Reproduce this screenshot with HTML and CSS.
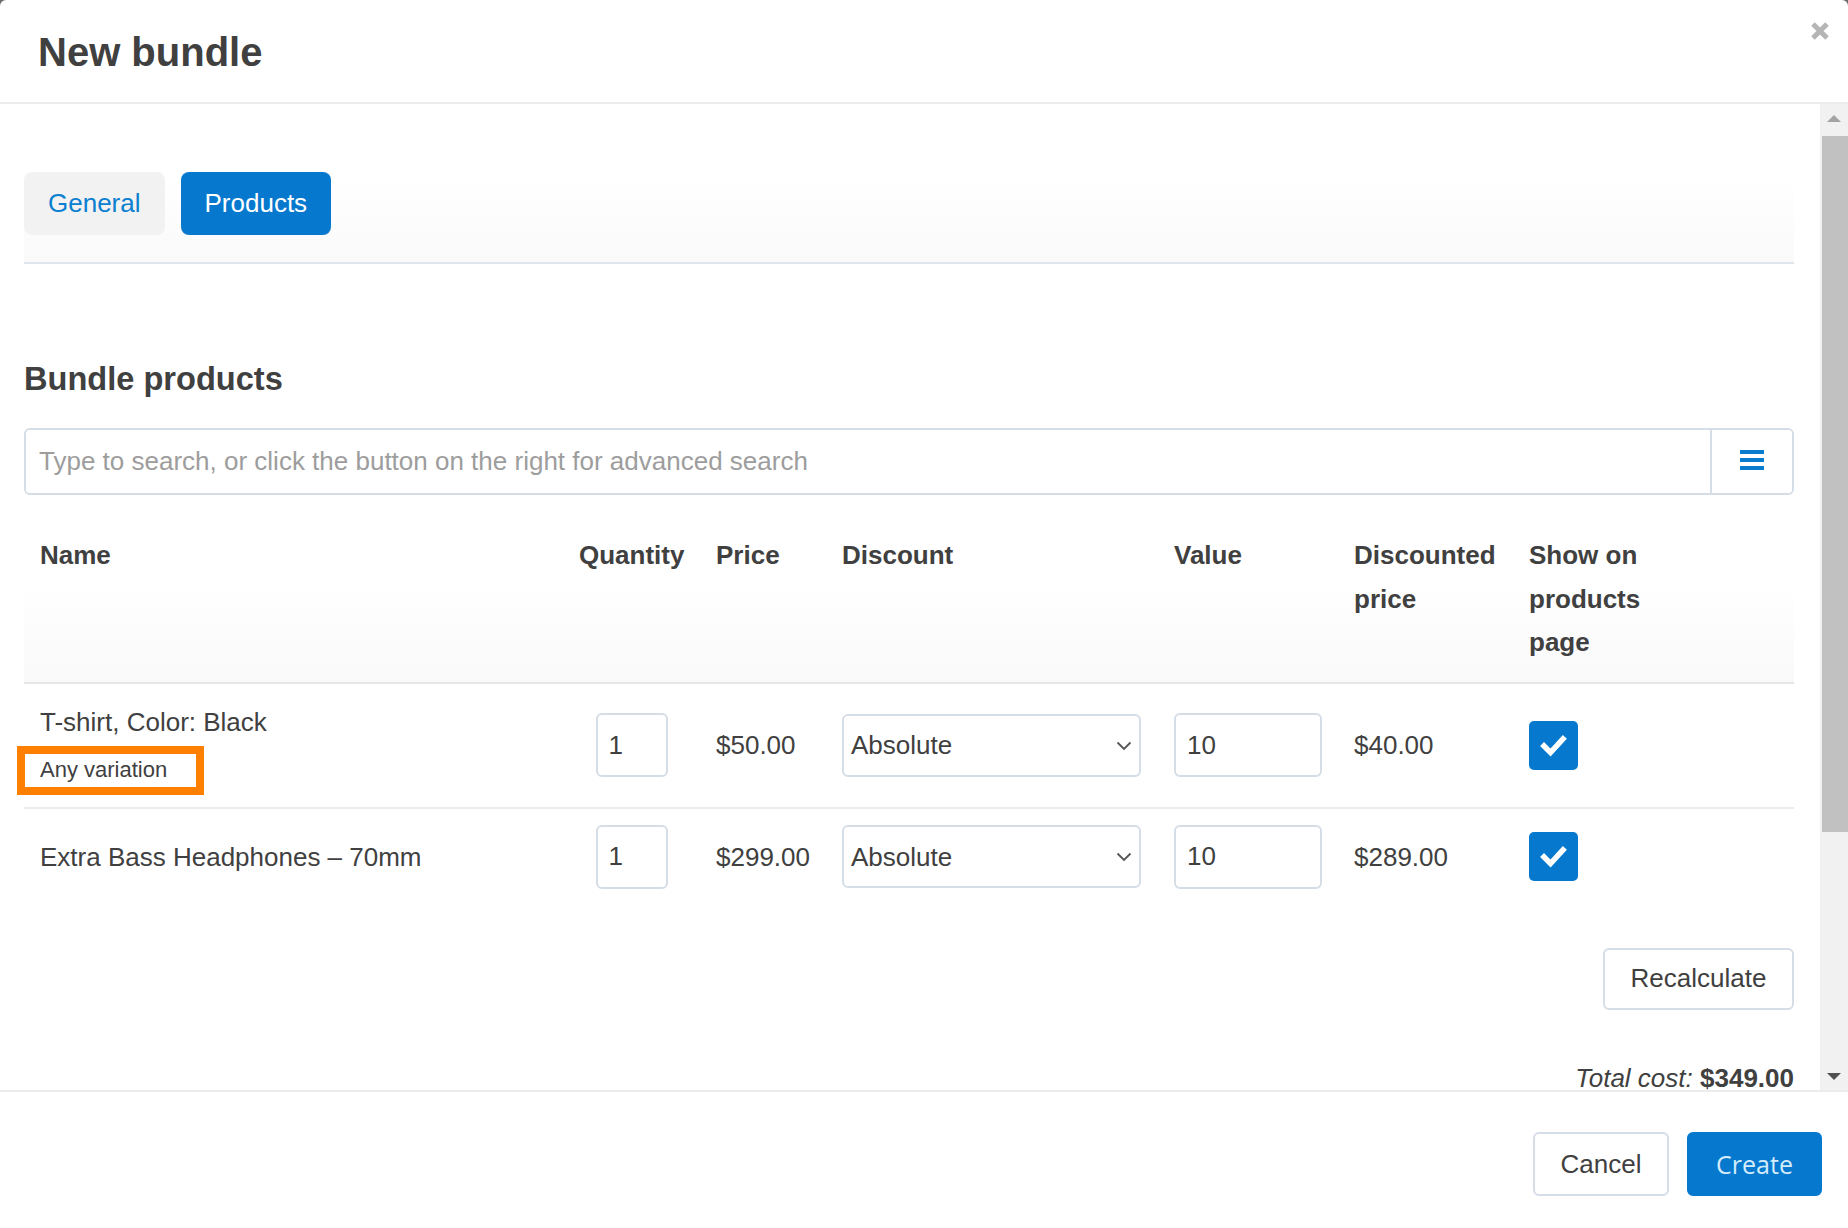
FILE: index.html
```html
<!DOCTYPE html>
<html lang="en">
<head>
<meta charset="utf-8">
<title>New bundle</title>
<link rel="stylesheet" href="styles.css">
</head>
<body>
<div class="modal">
  <header class="modal-header">
    <h1 class="modal-title">New bundle</h1>
    <button class="close-btn" type="button" aria-label="Close">
      <svg width="20" height="20" viewBox="0 0 20 20"><path d="M3 3 L17 17 M17 3 L3 17" stroke="#b5b5b5" stroke-width="5" stroke-linecap="butt"/></svg>
    </button>
  </header>

  <div class="modal-main">
    <div class="modal-body">
      <div class="tabs-wrap">
        <nav class="tabs">
          <button class="tab" type="button">General</button>
          <button class="tab tab-active" type="button">Products</button>
        </nav>
      </div>

      <h2 class="section-title">Bundle products</h2>

      <div class="search">
        <input class="search-input" type="text" placeholder="Type to search, or click the button on the right for advanced search">
        <button class="search-btn" type="button" aria-label="Advanced search">
          <span class="bars"><span></span><span></span><span></span></span>
        </button>
      </div>

      <table class="products">
        <colgroup>
          <col class="c-name"><col class="c-qty"><col class="c-price"><col class="c-disc"><col class="c-val"><col class="c-dprice"><col class="c-show"><col class="c-extra">
        </colgroup>
        <thead>
          <tr>
            <th>Name</th>
            <th>Quantity</th>
            <th>Price</th>
            <th>Discount</th>
            <th>Value</th>
            <th>Discounted price</th>
            <th>Show on products page</th>
            <th></th>
          </tr>
        </thead>
        <tbody>
          <tr class="row-first">
            <td>
              <div class="prod-name">T-shirt, Color: Black</div>
              <div class="prod-var"><span class="variation">Any variation</span></div>
            </td>
            <td class="center"><input class="field qty" type="text" value="1"></td>
            <td>$50.00</td>
            <td>
              <span class="select-wrap">
                <select class="field select"><option>Absolute</option><option>Percentage</option></select>
                <svg class="chev" width="16" height="10" viewBox="0 0 16 10"><path d="M1.5 1.5 L8 8 L14.5 1.5" fill="none" stroke="#555" stroke-width="1.8"/></svg>
              </span>
            </td>
            <td><input class="field value" type="text" value="10"></td>
            <td>$40.00</td>
            <td><span class="checkbox"><svg width="49" height="49" viewBox="0 0 49 49"><path d="M15 25 L21.5 31.5 L34 18" fill="none" stroke="#fff" stroke-width="5.5" stroke-linecap="square"/></svg></span></td>
            <td></td>
          </tr>
          <tr>
            <td>Extra Bass Headphones – 70mm</td>
            <td class="center"><input class="field qty" type="text" value="1"></td>
            <td>$299.00</td>
            <td>
              <span class="select-wrap">
                <select class="field select"><option>Absolute</option><option>Percentage</option></select>
                <svg class="chev" width="16" height="10" viewBox="0 0 16 10"><path d="M1.5 1.5 L8 8 L14.5 1.5" fill="none" stroke="#555" stroke-width="1.8"/></svg>
              </span>
            </td>
            <td><input class="field value" type="text" value="10"></td>
            <td>$289.00</td>
            <td><span class="checkbox"><svg width="49" height="49" viewBox="0 0 49 49"><path d="M15 25 L21.5 31.5 L34 18" fill="none" stroke="#fff" stroke-width="5.5" stroke-linecap="square"/></svg></span></td>
            <td></td>
          </tr>
        </tbody>
      </table>

      <div class="recalc-row">
        <button class="btn btn-default" type="button">Recalculate</button>
      </div>
      <div class="total"><em>Total cost:</em> <strong>$349.00</strong></div>
    </div>

    <div class="scrollbar" aria-hidden="true">
      <div class="sb-btn"><span class="tri-up"></span></div>
      <div class="sb-track"><div class="sb-thumb"></div></div>
      <div class="sb-btn"><span class="tri-down"></span></div>
    </div>
  </div>

  <footer class="modal-footer">
    <button class="btn btn-default btn-cancel" type="button">Cancel</button>
    <button class="btn btn-primary btn-create" type="button">Create</button>
  </footer>
</div>
</body>
</html>
```

FILE: styles.css
```css
* { box-sizing: border-box; }

html, body {
  margin: 0;
  padding: 0;
  width: 1848px;
  height: 1228px;
  overflow: hidden;
  background: #6b6b6b;
}

body {
  font-family: "Liberation Sans", Arial, sans-serif;
  font-size: 26px;
  color: #404040;
}

.modal {
  width: 1848px;
  height: 1228px;
  background: #fff;
  border-radius: 6px 6px 0 0;
  display: flex;
  flex-direction: column;
  overflow: hidden;
}

/* header */
.modal-header {
  display: flex;
  justify-content: space-between;
  align-items: flex-start;
  padding: 28px 18px 26px 38px;
  border-bottom: 2px solid #ececec;
  height: 104px;
  flex: none;
}

.modal-title {
  margin: 0;
  font-size: 40px;
  line-height: 48px;
  font-weight: bold;
  color: #404040;
}

.close-btn {
  margin-top: -7px;
  padding: 0;
  border: 0;
  background: transparent;
  width: 20px;
  height: 20px;
  display: block;
}
.close-btn svg { display: block; }

/* main */
.modal-main {
  flex: 1;
  display: flex;
  min-height: 0;
}

.modal-body {
  flex: 1;
  min-width: 0;
  overflow: hidden;
  padding: 0 26px 0 24px;
}

.tabs-wrap {
  padding-top: 68px;
  padding-bottom: 27px;
  border-bottom: 2px solid #dfe5ec;
  background: linear-gradient(#ffffff 0%, #ffffff 45%, #fafafa 100%);
}

.tabs {
  display: flex;
  gap: 16px;
}

.tab {
  height: 63px;
  padding: 0 24px;
  border: 0;
  border-radius: 8px;
  font-family: "Liberation Sans", Arial, sans-serif;
  font-size: 26px;
  background: #f2f2f2;
  color: #0b7fd0;
}

.tab-active {
  background: #0679cf;
  color: #ffffff;
}

.section-title {
  margin: 96px 0 0 0;
  font-size: 32.6px;
  line-height: 38.4px;
  font-weight: bold;
  color: #404040;
}

/* search */
.search {
  margin-top: 30px;
  height: 67px;
  display: flex;
  border: 2px solid #d5dde6;
  border-radius: 6px;
  overflow: hidden;
  background: #fff;
}

.search-input {
  flex: 1;
  min-width: 0;
  border: 0;
  outline: none;
  padding: 0 13px;
  font-family: "Liberation Sans", Arial, sans-serif;
  font-size: 26px;
  color: #404040;
  background: #fff;
}
.search-input::placeholder { color: #9d9d9d; }

.search-btn {
  width: 82px;
  border: 0;
  border-left: 2px solid #d5dde6;
  background: #fff;
  display: flex;
  align-items: center;
  justify-content: center;
  padding: 0 0 4px 0;
}

.bars {
  display: flex;
  flex-direction: column;
  gap: 4px;
  width: 24px;
}
.bars span {
  display: block;
  height: 4px;
  background: #0a7ccf;
}

/* table */
.products {
  margin-top: 22px;
  width: 100%;
  table-layout: fixed;
  border-collapse: collapse;
}

.c-name { width: 539px; }
.c-qty { width: 137px; }
.c-price { width: 126px; }
.c-disc { width: 332px; }
.c-val { width: 180px; }
.c-dprice { width: 175px; }
.c-show { width: 144px; }
.c-extra { width: 137px; }

.products thead tr {
  background: linear-gradient(#ffffff 0%, #ffffff 40%, #f9f9f9 100%);
}

.products th {
  text-align: left;
  vertical-align: top;
  font-weight: bold;
  line-height: 43.5px;
  padding: 17px 16px;
  border-bottom: 2px solid #e6e6e6;
  color: #404040;
}

.products td {
  vertical-align: middle;
  padding: 16px 16px;
  line-height: 38px;
  white-space: nowrap;
}

.products .row-first td {
  border-bottom: 2px solid #ececec;
}

.products td.center { text-align: center; }

.prod-name { line-height: 44px; }
.prod-var {
  margin-top: 3px;
  line-height: 42px;
}

.variation {
  position: relative;
  display: inline-block;
  font-size: 22px;
  line-height: 42px;
}
.variation::after {
  content: "";
  position: absolute;
  top: -2.5px;
  bottom: -4.5px;
  left: -23px;
  right: -37px;
  border: 8px solid #ff8000;
  pointer-events: none;
}

.field {
  height: 64px;
  border: 2px solid #d5dde6;
  border-radius: 6px;
  background: #fff;
  font-family: "Liberation Sans", Arial, sans-serif;
  font-size: 26px;
  color: #404040;
  padding: 0 11px;
  vertical-align: middle;
  outline: none;
}

.qty { width: 72px; text-align: left; }
.value { width: 148px; }

.select-wrap {
  position: relative;
  display: inline-block;
  vertical-align: middle;
}
.select {
  display: block;
  width: 299px;
  height: 63px;
  -webkit-appearance: none;
  appearance: none;
  padding: 0 30px 0 7px;
}
.chev {
  position: absolute;
  right: 9px;
  top: 27px;
  pointer-events: none;
}

.checkbox {
  display: block;
  width: 49px;
  height: 49px;
  background: #0679cf;
  border-radius: 5px;
}
.checkbox svg { display: block; }

/* buttons */
.btn {
  font-family: "Liberation Sans", Arial, sans-serif;
  font-size: 26px;
  border-radius: 6px;
  cursor: pointer;
}

.btn-default {
  background: #fff;
  border: 2px solid #d5dde6;
  color: #404040;
}

.btn-primary {
  background: #0679cf;
  border: 2px solid #0679cf;
  color: #d4ecfb;
}

.recalc-row {
  display: flex;
  justify-content: flex-end;
  margin-top: 43px;
}
.recalc-row .btn {
  width: 191px;
  height: 62px;
}

.total {
  margin-top: 49px;
  text-align: right;
  line-height: 38.4px;
}
.total em { font-style: italic; }
.total strong { font-weight: bold; }

/* fake scrollbar */
.scrollbar {
  width: 28px;
  flex: none;
  background: #f1f1f1;
  display: flex;
  flex-direction: column;
}
.sb-btn {
  height: 28px;
  flex: none;
  display: flex;
  align-items: center;
  justify-content: center;
}
.sb-track {
  flex: 1;
  padding: 4px 0 0 2px;
}
.sb-thumb {
  height: 696px;
  background: #c1c1c1;
}
.tri-up {
  width: 0; height: 0;
  border-left: 7px solid transparent;
  border-right: 7px solid transparent;
  border-bottom: 7px solid #a3a3a3;
}
.tri-down {
  width: 0; height: 0;
  border-left: 7px solid transparent;
  border-right: 7px solid transparent;
  border-top: 7px solid #505050;
}

/* footer */
.modal-footer {
  flex: none;
  height: 138px;
  border-top: 2px solid #ececec;
  display: flex;
  justify-content: flex-end;
  align-items: flex-start;
  gap: 18px;
  padding: 40px 26px 0 0;
}
.btn-cancel {
  width: 136px;
  height: 64px;
}
.btn-create {
  width: 135px;
  height: 64px;
  font-family: "Open Sans", "Liberation Sans", sans-serif;
  font-size: 25px;
}
```
